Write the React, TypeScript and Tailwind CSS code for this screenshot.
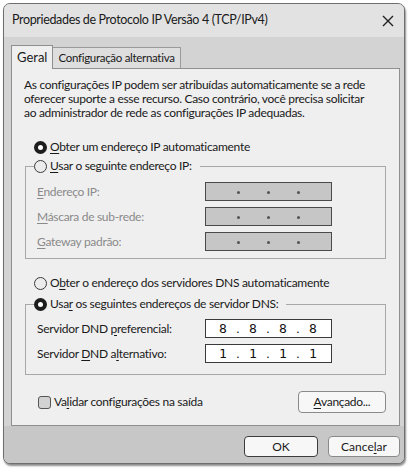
import React from "react";

const font = { fontFamily: 'Lato, "Noto Sans", sans-serif' };

function Radio({ checked }: { checked?: boolean }) {
  return checked ? (
    <span className="flex h-[13px] w-[13px] shrink-0 items-center justify-center rounded-full bg-[#1c1c1c]">
      <span className="h-[5px] w-[5px] rounded-full bg-white" />
    </span>
  ) : (
    <span className="h-[13px] w-[13px] shrink-0 rounded-full border-[1.5px] border-[#3a3a3a] bg-[#ececec]" />
  );
}

function IpField({ parts, disabled }: { parts?: string[]; disabled?: boolean }) {
  const cells = parts ?? ["", "", "", ""];
  return (
    <div
      className={
        "flex h-[19px] w-[127px] items-center pl-[2px] tracking-normal " +
        (disabled
          ? "border-[1.5px] border-[#4a4a4a] bg-[#c6c6c6]"
          : "border-[1.5px] border-[#3a3a3a] bg-white")
      }
    >
      {cells.map((p, i) => (
        <React.Fragment key={i}>
          {i > 0 && (
            <span className="flex w-0 justify-center">
              {disabled ? (
                <span className="mt-[2px] h-[3px] w-[3px] shrink-0 rounded-full bg-[#555]" />
              ) : (
                <span className="shrink-0 text-[12px] leading-none text-[#111]">.</span>
              )}
            </span>
          )}
          <span
            className="w-[30px] text-center text-[13px] leading-none text-[#111]"
            style={{ fontFamily: '"DejaVu Sans Mono", monospace' }}
          >
            {p}
          </span>
        </React.Fragment>
      ))}
    </div>
  );
}

function Row({
  label,
  children,
  disabled,
}: {
  label: React.ReactNode;
  children: React.ReactNode;
  disabled?: boolean;
}) {
  return (
    <div className="flex items-center">
      <span className={"w-[179px] pl-[11px] text-[12px] " + (disabled ? "text-[#8a8a8a]" : "text-[#1a1a1a]")}>
        {label}
      </span>
      {children}
    </div>
  );
}

export default function App() {
  return (
    <div className="h-[474px] w-[413px] bg-white pl-[3px] pt-[3px]" style={font}>
      <div className="flex h-[461px] w-[402px] flex-col overflow-hidden rounded-[7px] border border-[#6f6f6f] bg-[#d3d3d3] shadow-[1px_2px_2px_rgba(0,0,0,0.45)]">
        {/* title bar */}
        <div className="flex h-[33px] shrink-0 items-center justify-between bg-[#e2e2e2] pl-[8px] pr-[10px]">
          <span className="text-[12.5px] tracking-[-0.35px] text-[#1a1a1a]">
            Propriedades de Protocolo IP Versão 4 (TCP/IPv4)
          </span>
          <svg width="12" height="12" viewBox="0 0 12 12">
            <path d="M1 1 L11 11 M11 1 L1 11" stroke="#222" strokeWidth="1.4" />
          </svg>
        </div>

        {/* tabs */}
        <div className="flex h-[31px] shrink-0 items-end pl-[7px] pt-[8px]">
          <div className="relative z-10 -mb-px flex h-[24px] items-center border border-b-0 border-[#8f8f8f] bg-[#efefef] px-[5px] text-[13px] text-[#1a1a1a]">
            Geral
          </div>
          <div className="flex h-[21px] items-center border border-b-0 border-l-0 border-[#9a9a9a] bg-[#dedede] px-[5px] text-[11.5px] tracking-[-0.3px] text-[#1a1a1a]">
            Configuração alternativa
          </div>
        </div>

        {/* panel */}
        <div className="ml-[7px] mr-[4px] flex h-[358px] shrink-0 flex-col border border-[#8f8f8f] bg-[#efefef] px-[12px] pt-[9px] text-[12px] tracking-[-0.3px] text-[#1a1a1a]">
          <div className="leading-[14px]">
            <div className="whitespace-nowrap">As configurações IP podem ser atribuídas automaticamente se a rede</div>
            <div className="whitespace-nowrap">oferecer suporte a esse recurso. Caso contrário, você precisa solicitar</div>
            <div className="whitespace-nowrap">ao administrador de rede as configurações IP adequadas.</div>
          </div>

          <div className="mt-[18px] flex items-center gap-[3px] pl-[10px]">
            <Radio checked />
            <span>
              <u className="underline-offset-2">O</u>bter um endereço IP automaticamente
            </span>
          </div>

          <fieldset className="ml-px mr-px mt-[1px] h-[102px] border border-[#a8a8a8] px-0 pb-[7px]">
            <legend className="ml-[8px] flex items-center gap-[3px] pr-[8px]">
              <Radio />
              <span>
                <u className="underline-offset-2">U</u>sar o seguinte endereço IP:
              </span>
            </legend>
            <div className="mt-[7px] flex flex-col gap-[6px]">
              <Row disabled label={<><u className="underline-offset-2">E</u>ndereço IP:</>}>
                <IpField disabled />
              </Row>
              <Row disabled label={<><u className="underline-offset-2">M</u>áscara de sub-rede:</>}>
                <IpField disabled />
              </Row>
              <Row disabled label={<><u className="underline-offset-2">G</u>ateway padrão:</>}>
                <IpField disabled />
              </Row>
            </div>
          </fieldset>

          <div className="mt-[15px] flex items-center gap-[3px] pl-[10px]">
            <Radio />
            <span>
              O<u className="underline-offset-2">b</u>ter o endereço dos servidores DNS automaticamente
            </span>
          </div>

          <fieldset className="ml-px mr-px mt-[3px] h-[80px] border border-[#a8a8a8] px-0">
            <legend className="ml-[8px] flex items-center gap-[3px] pr-[8px]">
              <Radio checked />
              <span>
                Usa<u className="underline-offset-2">r</u> os seguintes endereços de servidor DNS:
              </span>
            </legend>
            <div className="mt-[6px] flex flex-col gap-[6px]">
              <Row label={<>Servidor DND <u className="underline-offset-2">p</u>referencial:</>}>
                <IpField parts={["8", "8", "8", "8"]} />
              </Row>
              <Row label={<>Servidor <u className="underline-offset-2">D</u>ND a<u className="underline-offset-2">l</u>ternativo:</>}>
                <IpField parts={["1", "1", "1", "1"]} />
              </Row>
            </div>
          </fieldset>

          <div className="mt-[16px] flex items-center justify-between pl-[14px] pr-[1px]">
            <div className="flex items-center gap-[3px]">
              <span className="h-[13px] w-[13px] rounded-[3px] border-[1.5px] border-[#555] bg-[#d2d2d2]" />
              <span>
                Va<u className="underline-offset-2">l</u>idar configurações na saída
              </span>
            </div>
            <button className="flex h-[22px] w-[88px] items-center justify-center rounded-[4px] border border-[#8a8a8a] bg-[#f7f7f7] text-[12px]">
              <span>
                <u className="underline-offset-2">A</u>vançado...
              </span>
            </button>
          </div>
        </div>

        {/* bottom buttons */}
        <div className="flex flex-1 items-center justify-end gap-[10px] bg-[#c7c7c7] pr-[4px] pt-[4px]">
          <button className="flex h-[21px] w-[74px] items-center justify-center rounded-[4px] border-[1.5px] border-[#3c3c3c] bg-[#f7f7f7] text-[12px] text-[#1a1a1a]">
            OK
          </button>
          <button className="flex h-[21px] w-[72px] items-center justify-center rounded-[4px] border border-[#8a8a8a] bg-[#f7f7f7] text-[12px] text-[#1a1a1a]">
            <span>
              Cance<u className="underline-offset-2">l</u>ar
            </span>
          </button>
        </div>
      </div>
    </div>
  );
}
